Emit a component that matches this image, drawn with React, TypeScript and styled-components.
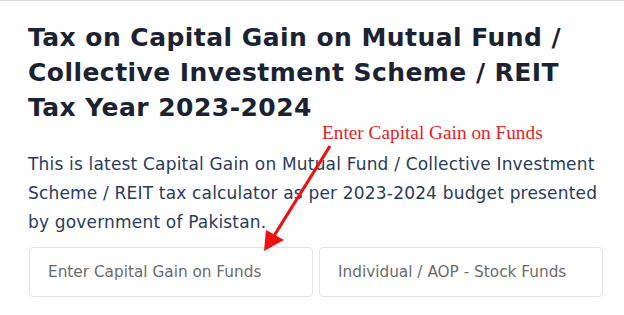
import React from "react";
import styled, { createGlobalStyle } from "styled-components";

const GlobalStyle = createGlobalStyle`
    html, body {
        margin: 0;
        padding: 0;
        background: #ffffff;
    }
    body {
        font-family: "DejaVu Sans", "Open Sans", sans-serif;
    }
`;

const Page = styled.div`
    position: relative;
    width: 624px;
    height: 315px;
    box-sizing: border-box;
    border-top: 1px solid #dcdcdc;
    padding: 19px 21px 0 28px;
    overflow: hidden;
`;

const Title = styled.h1`
    margin: 0;
    font-family: "DejaVu Sans", sans-serif;
    font-size: 25px;
    font-weight: 700;
    line-height: 35px;
    color: #1b2232;
    letter-spacing: 0.45px;
    white-space: nowrap;
`;

const Intro = styled.p`
    margin: 25px 0 0;
    font-family: "DejaVu Sans", sans-serif;
    font-size: 17px;
    line-height: 29px;
    color: #293b5c;
    letter-spacing: 0.18px;
    white-space: nowrap;
`;

const Fields = styled.div`
    display: grid;
    grid-template-columns: 284px 284px;
    gap: 6px;
    margin: 10px 0 0 1px;
`;

const Field = styled.div`
    height: 50px;
    box-sizing: border-box;
    border: 1px solid #e3e3e3;
    border-radius: 4px;
    display: flex;
    align-items: center;
    padding-left: ${(p: { $pad: number }) => p.$pad}px;
    font-family: "DejaVu Sans", sans-serif;
    font-size: 15.3px;
    color: #6b6b6b;
`;

const Note = styled.div`
    position: absolute;
    left: 322px;
    top: 121px;
    font-family: "Liberation Serif", serif;
    font-size: 19.3px;
    color: #e52222;
    white-space: nowrap;
`;

const Arrow = styled.svg`
    position: absolute;
    left: 0;
    top: 0;
    pointer-events: none;
`;

export default function App() {
    return (
        <>
            <GlobalStyle />
            <Page>
                <Title>
                    Tax on Capital Gain on Mutual Fund /<br />
                    Collective Investment Scheme / REIT<br />
                    Tax Year 2023-2024
                </Title>
                <Intro>
                    This is latest Capital Gain on Mutual Fund / Collective Investment<br />
                    Scheme / REIT tax calculator as per 2023-2024 budget presented<br />
                    by government of Pakistan.
                </Intro>
                <Fields>
                    <Field $pad={18}>Enter Capital Gain on Funds</Field>
                    <Field $pad={18}>Individual / AOP - Stock Funds</Field>
                </Fields>
                <Note>Enter Capital Gain on Funds</Note>
                <Arrow width="624" height="315" viewBox="0 0 624 315">
                    <line x1="330" y1="145" x2="272" y2="238" stroke="#ee1111" strokeWidth="3.2" />
                    <polygon points="264,250 266,229 284,239" fill="#ee1111" />
                </Arrow>
            </Page>
        </>
    );
}
